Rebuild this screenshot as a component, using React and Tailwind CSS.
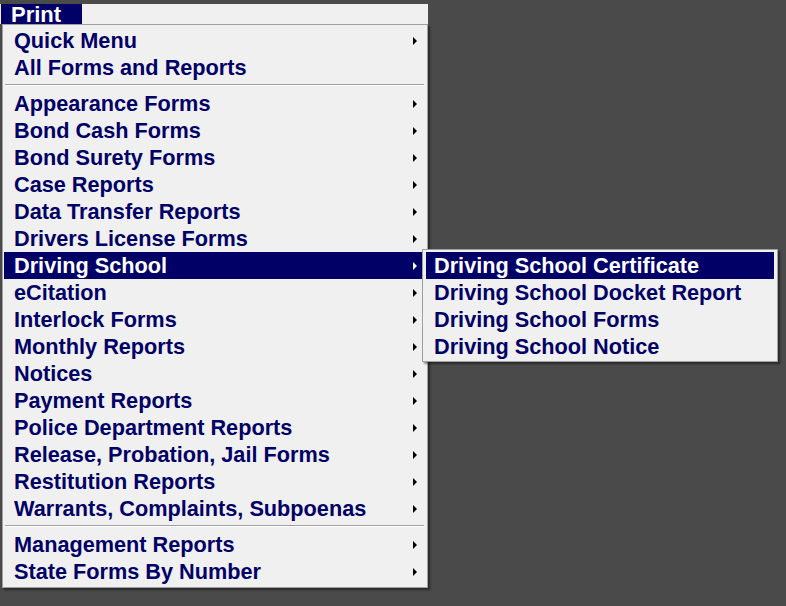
import React from 'react';

const mainItems = [
    { name: 'Quick Menu', sub: true },
    { name: 'All Forms and Reports' },
    { sep: true },
    { name: 'Appearance Forms', sub: true },
    { name: 'Bond Cash Forms', sub: true },
    { name: 'Bond Surety Forms', sub: true },
    { name: 'Case Reports', sub: true },
    { name: 'Data Transfer Reports', sub: true },
    { name: 'Drivers License Forms', sub: true },
    { name: 'Driving School', sub: true, active: true },
    { name: 'eCitation', sub: true },
    { name: 'Interlock Forms', sub: true },
    { name: 'Monthly Reports', sub: true },
    { name: 'Notices', sub: true },
    { name: 'Payment Reports', sub: true },
    { name: 'Police Department Reports', sub: true },
    { name: 'Release, Probation, Jail Forms', sub: true },
    { name: 'Restitution Reports', sub: true },
    { name: 'Warrants, Complaints, Subpoenas', sub: true },
    { sep: true },
    { name: 'Management Reports', sub: true },
    { name: 'State Forms By Number', sub: true },
];

const subItems = [
    'Driving School Certificate',
    'Driving School Docket Report',
    'Driving School Forms',
    'Driving School Notice',
];

const Arrow = ({ active }) => (
    <svg width="4" height="8" viewBox="0 0 4 8" className="shrink-0">
        <path d="M0 0 L4 4 L0 8 Z" fill={active ? '#ffffff' : '#000000'} />
    </svg>
);

const MenuRow = ({ item }) => {
    if (item.sep) {
        return (
            <div className="h-[9px] pt-[3px] px-[1px]">
                <div className="h-px bg-[#a0a0a0]" />
                <div className="h-px bg-white" />
            </div>
        );
    }
    return (
        <div
            className={`h-[27px] flex items-center pl-[10px] pr-[8px] ${item.active ? 'bg-[#000066] text-white' : 'text-[#000066]'}`}
        >
            <span className="flex-1 leading-[27px] whitespace-nowrap">{item.name}</span>
            {item.sub && <Arrow active={item.active} />}
        </div>
    );
};

export default function App() {
    return (
        <div className="w-[786px] h-[606px] bg-[#4a4a4a] relative pt-1 font-['Liberation_Sans',Arial,sans-serif] font-bold text-[21.7px] overflow-hidden">
            {/* Menu bar */}
            <div className="w-[428px] h-5 bg-[#f0f0f0] flex">
                <div className="w-[81px] ml-px bg-[#000066] text-white text-[22px] leading-[21px] pl-[10px]">Print</div>
            </div>

            {/* Main dropdown */}
            <div className="ml-[2px] w-[426px] bg-[#f0f0f0] border border-[#a0a0a0] pt-[2px] pb-[2px] pl-[1px] pr-[2px] shadow-[2px_2px_2px_rgba(0,0,0,0.45)]">
                {mainItems.map((item, i) => (
                    <MenuRow key={i} item={item} />
                ))}
            </div>

            {/* Submenu */}
            <div className="absolute left-[422px] top-[249px] w-[356px] bg-[#f0f0f0] border border-[#a0a0a0] pt-[2px] pb-[1px] px-[3px] shadow-[2px_2px_2px_rgba(0,0,0,0.45)]">
                {subItems.map((name, i) => (
                    <div
                        key={name}
                        className={`h-[27px] pl-[8px] leading-[27px] whitespace-nowrap ${i === 0 ? 'bg-[#000066] text-white' : 'text-[#000066]'}`}
                    >
                        {name}
                    </div>
                ))}
            </div>
        </div>
    );
}
